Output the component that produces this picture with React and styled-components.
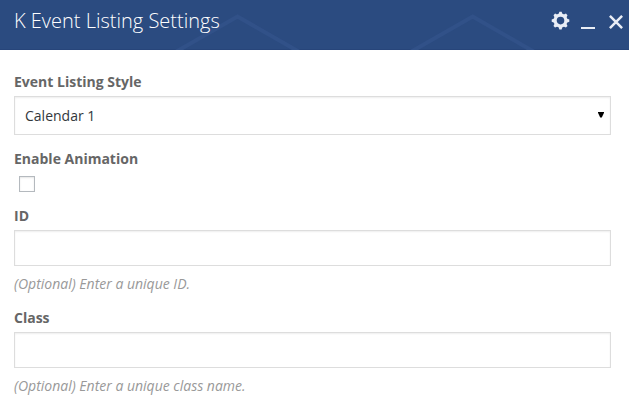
import React from "react";
import styled, { createGlobalStyle } from "styled-components";

const GlobalStyle = createGlobalStyle`
  *, *::before, *::after { box-sizing: border-box; }
  body {
    margin: 0;
    background: #fff;
    font-family: "Open Sans", "Noto Sans", sans-serif;
    overflow: hidden;
  }
`;

const Panel = styled.main`
  width: 629px;
  height: 405px;
  background: #fff;
`;

const Header = styled.header`
  position: relative;
  display: flex;
  justify-content: space-between;
  height: 50px;
  padding: 0 4px 0 14px;
  background: #2b4b80;
  border-bottom: 1px solid #27457a;
`;

const Pattern = styled.svg`
  position: absolute;
  inset: 0;
  fill: none;
  stroke: #315188;
  stroke-width: 4;
`;

const Title = styled.h1`
  position: relative;
  margin: 0;
  font-size: 20px;
  font-weight: 300;
  line-height: 41px;
  color: #fff;
  white-space: nowrap;
`;

const Actions = styled.div`
  position: relative;
  display: flex;
  gap: 11px;
  padding-top: 11px;
`;

const IconButton = styled.button`
  display: block;
  width: ${({ $width }) => $width}px;
  height: 20px;
  padding: 0;
  border: 0;
  background: none;
  color: #e9edf5;

  svg { display: block; }
`;

const Form = styled.form`
  display: flex;
  flex-direction: column;
  gap: 14px;
  padding: 22px 18px 0 14px;
`;

const Field = styled.div`
  display: flex;
  flex-direction: column;
`;

const Label = styled.label`
  height: 20px;
  margin-bottom: ${({ $gap = 4 }) => $gap}px;
  font-size: 14px;
  font-weight: 700;
  line-height: 20px;
  color: #666;
`;

const Control = styled.input`
  width: 100%;
  height: 36px;
  padding: 0 10px;
  border: 1px solid #ddd;
  border-radius: 0;
  outline: 0;
  background: #fff;
  box-shadow: inset 0 1px 2px rgba(0, 0, 0, 0.07);
  font: 14px "Open Sans", sans-serif;
  color: #32373c;
`;

const SelectWrap = styled.div`
  position: relative;
`;

const Select = styled(Control)`
  display: block;
  height: 39px;
  appearance: none;
`;

const Arrow = styled.svg`
  position: absolute;
  top: 16px;
  right: 7px;
  pointer-events: none;
`;

const Checkbox = styled.input`
  appearance: none;
  width: 16px;
  height: 16px;
  margin: 0 0 0 5px;
  border: 1px solid #b4b9be;
  background: #fff;
  box-shadow: inset 0 1px 2px rgba(0, 0, 0, 0.1);
`;

const Hint = styled.p`
  height: 20px;
  margin: 8px 0 0;
  font-size: 14px;
  font-style: italic;
  line-height: 20px;
  color: #999;
`;

function TextField({ id, label, hint }) {
  return (
    <Field>
      <Label htmlFor={id}>{label}</Label>
      <Control id={id} type="text" />
      <Hint>{hint}</Hint>
    </Field>
  );
}

const teeth = [0, 45, 90, 135, 180, 225, 270, 315];

export default function App() {
  return (
    <Panel>
      <GlobalStyle />
      <Header>
        <Pattern width="629" height="50" viewBox="0 0 629 50" aria-hidden="true">
          <path d="M173 53.5L237.5 16.5L302 53.5M408 53.5L472.7 16.5L537 53.5" />
        </Pattern>
        <Title>K Event Listing Settings</Title>
        <Actions>
          <IconButton type="button" aria-label="Settings" $width={19}>
            <svg width="19" height="20" viewBox="0 0 19 20">
              <circle cx="9.5" cy="9.6" r="5.4" fill="none" stroke="currentColor" strokeWidth="3.2" />
              {teeth.map((angle) => (
                <path
                  key={angle}
                  d="M7.2 4L8.4 .8H10.6L11.8 4Z"
                  fill="currentColor"
                  transform={`rotate(${angle} 9.5 9.6)`}
                />
              ))}
            </svg>
          </IconButton>
          <IconButton type="button" aria-label="Minimize" $width={15}>
            <svg width="15" height="20" viewBox="0 0 15 20">
              <path d="M0 16H14V18H0Z" fill="currentColor" />
            </svg>
          </IconButton>
          <IconButton type="button" aria-label="Close" $width={18}>
            <svg width="18" height="20" viewBox="0 0 18 20">
              <path d="M2.9 4.9L15.1 17.1M15.1 4.9L2.9 17.1" fill="none" stroke="currentColor" strokeWidth="2.5" />
            </svg>
          </IconButton>
        </Actions>
      </Header>
      <Form>
        <Field>
          <Label htmlFor="style">Event Listing Style</Label>
          <SelectWrap>
            <Select as="select" id="style">
              <option>Calendar 1</option>
            </Select>
            <Arrow width="6" height="6" viewBox="0 0 6 6" aria-hidden="true">
              <path d="M0 0H6V.8L3.8 5.6H2.2L0 .8Z" />
            </Arrow>
          </SelectWrap>
        </Field>
        <Field>
          <Label htmlFor="animation" $gap={7}>Enable Animation</Label>
          <Checkbox type="checkbox" id="animation" />
        </Field>
        <TextField id="unique-id" label="ID" hint="(Optional) Enter a unique ID." />
        <TextField id="class-name" label="Class" hint="(Optional) Enter a unique class name." />
      </Form>
    </Panel>
  );
}
